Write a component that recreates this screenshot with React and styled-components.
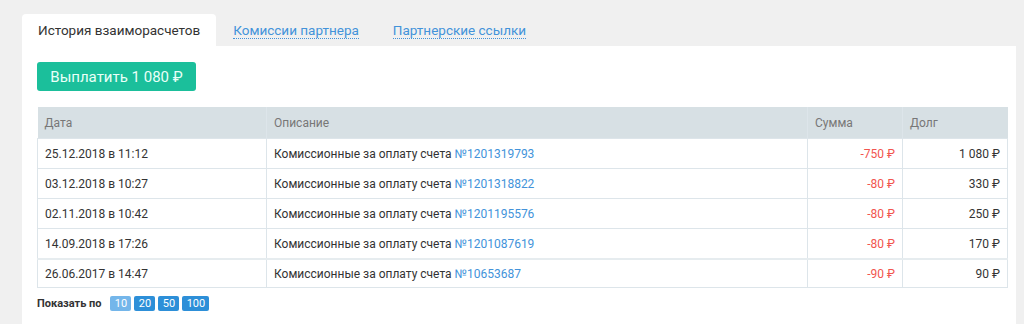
import React from "react";
import styled, { createGlobalStyle } from "styled-components";

const Colors = {
    page: "#f0f0f0",
    white: "#ffffff",
    text: "#333333",
    muted: "#777777",
    link: "#4393da",
    red: "#f2554f",
    teal: "#1bbf9b",
    head: "#d7e0e4",
    border: "#dde5ea",
    pager: "#2d8fd8",
    pagerActive: "#74b6ea"
};

const GlobalStyle = createGlobalStyle`
    html, body {
        margin: 0;
        padding: 0;
        background: ${Colors.page};
        font-family: Roboto, "Noto Sans", Arial, sans-serif;
        color: ${Colors.text};
    }
`;

const Page = styled.div`
    padding: 14px 8px 0 22px;
`;

const Tabs = styled.div`
    display: flex;
    align-items: stretch;
    height: 32px;
`;

const Tab = styled.div`
    display: flex;
    align-items: center;
    padding: 0 ${(p) => (p.active ? "16px" : "17px")};
    font-size: 13.5px;
    border-radius: 4px 4px 0 0;
    background: ${(p) => (p.active ? Colors.white : "transparent")};
    color: ${(p) => (p.active ? Colors.text : Colors.link)};
`;

const TabLink = styled.span`
    border-bottom: 1px dotted ${Colors.link};
    line-height: 16px;
    padding-top: 1px;
`;

const Panel = styled.div`
    background: ${Colors.white};
    padding: 16px 9px 14px 15px;
    min-height: 264px;
    box-sizing: border-box;
`;

const PayButton = styled.button`
    display: block;
    width: 159px;
    height: 29px;
    border: none;
    border-radius: 3px;
    background: ${Colors.teal};
    color: #eafff8;
    font-family: inherit;
    font-size: 15px;
    padding: 0;
    cursor: pointer;
`;

const Table = styled.table`
    width: 970px;
    margin-top: 16px;
    border-collapse: collapse;
    font-size: 12px;
    table-layout: fixed;
`;

const Th = styled.th`
    background: ${Colors.head};
    color: ${Colors.muted};
    font-weight: 400;
    text-align: left;
    height: 31px;
    padding: 0 7px;
    border-left: 1px solid ${Colors.border};
    &:first-child {
        border-left: none;
    }
`;

const Td = styled.td`
    height: ${(p) => (p.split ? "27px" : "29px")};
    padding: 0 7px;
    border: 1px solid ${Colors.border};
    border-top-width: ${(p) => (p.split ? "2px" : "1px")};
    border-top-color: ${(p) => (p.split ? "#e6ecef" : Colors.border)};
    text-align: ${(p) => (p.right ? "right" : "left")};
    color: ${(p) => (p.negative ? Colors.red : Colors.text)};
    white-space: nowrap;
`;

const Invoice = styled.a`
    color: ${Colors.link};
    text-decoration: none;
`;

const Pager = styled.div`
    display: flex;
    align-items: center;
    gap: 3px;
    margin-top: 8px;
    font-size: 11px;
`;

const PagerLabel = styled.b`
    color: ${Colors.text};
    margin-right: 6px;
`;

const PageSize = styled.span`
    display: inline-flex;
    align-items: center;
    justify-content: center;
    min-width: 21px;
    padding: 0 ${(p) => (p.wide ? "3px" : "0")};
    height: 15px;
    border-radius: 2px;
    font-size: 11px;
    color: ${Colors.white};
    background: ${(p) => (p.active ? Colors.pagerActive : Colors.pager)};
`;

const rows = [
    { date: "25.12.2018 в 11:12", invoice: "1201319793", sum: "-750 ₽", debt: "1 080 ₽" },
    { date: "03.12.2018 в 10:27", invoice: "1201318822", sum: "-80 ₽", debt: "330 ₽" },
    { date: "02.11.2018 в 10:42", invoice: "1201195576", sum: "-80 ₽", debt: "250 ₽" },
    { date: "14.09.2018 в 17:26", invoice: "1201087619", sum: "-80 ₽", debt: "170 ₽" },
    { date: "26.06.2017 в 14:47", invoice: "10653687", sum: "-90 ₽", debt: "90 ₽", split: true }
];

export default function App() {
    return (
        <Page>
            <GlobalStyle />
            <Tabs>
                <Tab active>История взаиморасчетов</Tab>
                <Tab>
                    <TabLink>Комиссии партнера</TabLink>
                </Tab>
                <Tab>
                    <TabLink>Партнерские ссылки</TabLink>
                </Tab>
            </Tabs>
            <Panel>
                <PayButton>Выплатить 1 080 ₽</PayButton>
                <Table>
                    <colgroup>
                        <col style={{ width: 229 }} />
                        <col style={{ width: 541 }} />
                        <col style={{ width: 95 }} />
                        <col style={{ width: 105 }} />
                    </colgroup>
                    <thead>
                        <tr>
                            <Th>Дата</Th>
                            <Th>Описание</Th>
                            <Th>Сумма</Th>
                            <Th>Долг</Th>
                        </tr>
                    </thead>
                    <tbody>
                        {rows.map((row) => (
                            <tr key={row.invoice}>
                                <Td split={row.split}>{row.date}</Td>
                                <Td split={row.split}>
                                    Комиссионные за оплату счета <Invoice href="#">№{row.invoice}</Invoice>
                                </Td>
                                <Td split={row.split} right negative>
                                    {row.sum}
                                </Td>
                                <Td split={row.split} right>
                                    {row.debt}
                                </Td>
                            </tr>
                        ))}
                    </tbody>
                </Table>
                <Pager>
                    <PagerLabel>Показать по</PagerLabel>
                    <PageSize active>10</PageSize>
                    <PageSize>20</PageSize>
                    <PageSize>50</PageSize>
                    <PageSize wide>100</PageSize>
                </Pager>
            </Panel>
        </Page>
    );
}
